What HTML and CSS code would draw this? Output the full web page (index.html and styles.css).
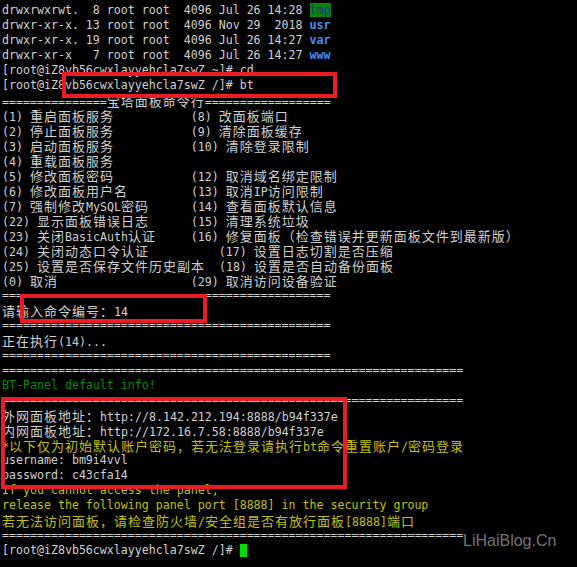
FILE: index.html
```html
<!DOCTYPE html>
<html lang="zh-CN">
<head>
    <meta charset="UTF-8">
    <title>bt - terminal</title>
    <link rel="stylesheet" href="styles.css">
</head>
<body>
    <div class="term">
        <div class="line">drwxrwxrwt.  8 root root  4096 Jul 26 14:28 <span class="ow">tmp</span></div>
        <div class="line">drwxr-xr-x. 13 root root  4096 Nov 29  2018 <span class="dir">usr</span></div>
        <div class="line">drwxr-xr-x. 19 root root  4096 Jul 26 14:27 <span class="dir">var</span></div>
        <div class="line">drwxr-xr-x   7 root root  4096 Jul 26 14:27 <span class="dir">www</span></div>
        <div class="line">[root@iZ8vb56cwxlayyehcla7swZ ~]# cd</div>
        <div class="line">[root@iZ8vb56cwxlayyehcla7swZ /]# bt</div>
        <div class="line">===============<span class="w">宝塔面板命令行</span>==================</div>
        <div class="line">(1) <span class="w">重启面板服务</span>           (8) <span class="w">改面板端口</span></div>
        <div class="line">(2) <span class="w">停止面板服务</span>           (9) <span class="w">清除面板缓存</span></div>
        <div class="line">(3) <span class="w">启动面板服务</span>           (10) <span class="w">清除登录限制</span></div>
        <div class="line">(4) <span class="w">重载面板服务</span></div>
        <div class="line">(5) <span class="w">修改面板密码</span>           (12) <span class="w">取消域名绑定限制</span></div>
        <div class="line">(6) <span class="w">修改面板用户名</span>         (13) <span class="w">取消</span>IP<span class="w">访问限制</span></div>
        <div class="line">(7) <span class="w">强制修改</span>MySQL<span class="w">密码</span>      (14) <span class="w">查看面板默认信息</span></div>
        <div class="line">(22) <span class="w">显示面板错误日志</span>      (15) <span class="w">清理系统垃圾</span></div>
        <div class="line">(23) <span class="w">关闭</span>BasicAuth<span class="w">认证</span>     (16) <span class="w">修复面板（检查错误并更新面板文件到最新版）</span></div>
        <div class="line">(24) <span class="w">关闭动态口令认证</span>          (17) <span class="w">设置日志切割是否压缩</span></div>
        <div class="line">(25) <span class="w">设置是否保存文件历史副本</span>  (18) <span class="w">设置是否自动备份面板</span></div>
        <div class="line">(0) <span class="w">取消</span>                   (29) <span class="w">取消访问设备验证</span></div>
        <div class="line">===============================================</div>
        <div class="line"><span class="w">请输入命令编号：</span>14</div>
        <div class="line">===============================================</div>
        <div class="line"><span class="w">正在执行</span>(14)...</div>
        <div class="line">===============================================</div>
        <div class="line">==================================================================</div>
        <div class="line green">BT-Panel default info!</div>
        <div class="line">==================================================================</div>
        <div class="line"><span class="w">外网面板地址：</span>http://8.142.212.194:8888/b94f337e</div>
        <div class="line"><span class="w">内网面板地址：</span>http://172.16.7.58:8888/b94f337e</div>
        <div class="line yellow">*<span class="w">以下仅为初始默认账户密码，若无法登录请执行</span>bt<span class="w">命令重置账户</span>/<span class="w">密码登录</span></div>
        <div class="line">username: bm9i4vvl</div>
        <div class="line">password: c43cfa14</div>
        <div class="line yellow">If you cannot access the panel,</div>
        <div class="line yellow">release the following panel port [8888] in the security group</div>
        <div class="line yellow"><span class="w">若无法访问面板，请检查防火墙</span>/<span class="w">安全组是否有放行面板</span>[8888]<span class="w">端口</span></div>
        <div class="line">==================================================================</div>
        <div class="line">[root@iZ8vb56cwxlayyehcla7swZ /]# <span class="cursor"></span></div>

        <!-- red marks drawn over the screenshot -->
        <div class="mark mark-cmd"></div>
        <div class="mark mark-input"></div>
        <div class="mark mark-info"></div>

        <div class="watermark">LiHaiBlog.Cn</div>
    </div>
</body>
</html>
```

FILE: styles.css
```css
html, body {
    margin: 0;
    height: 100%;
    background: #000;
    overflow: hidden;
}

.term {
    position: relative;
    height: 100%;
    padding: 3px 0 0 2px;
    box-sizing: border-box;
    font-family: "DejaVu Sans Mono", "Liberation Mono", monospace;
    font-size: 11.628px;
    color: #d0d0d0;
}

.line {
    height: 15px;
    line-height: 15px;
    white-space: pre;
}

/* CJK glyphs take two cells (14px) */
.w {
    font-family: "Noto Sans CJK SC", sans-serif;
    font-size: 13px;
    letter-spacing: 1px;
    line-height: 15px;
}

.dir {
    color: #4a8cf0;
    font-weight: bold;
}

.ow {
    color: #1b2f9a;
    background: #0c840c;
}

.green {
    color: #0b8a0b;
}

.yellow {
    color: #c2c200;
}

.cursor {
    display: inline-block;
    width: 7px;
    height: 13px;
    background: #00e000;
    vertical-align: -3px;
}

.mark {
    position: absolute;
    border: 4px solid #ec1c24;
    box-sizing: border-box;
}

.mark-cmd {
    left: 62px;
    top: 72px;
    width: 275px;
    height: 26px;
}

.mark-input {
    left: 20px;
    top: 294px;
    width: 187px;
    height: 29px;
}

.mark-info {
    left: 1px;
    top: 397px;
    width: 346px;
    height: 92px;
}

.watermark {
    position: absolute;
    left: 463px;
    top: 532px;
    font-family: "Liberation Sans", Arial, sans-serif;
    font-size: 16px;
    color: rgba(140, 140, 140, 0.85);
}
```
